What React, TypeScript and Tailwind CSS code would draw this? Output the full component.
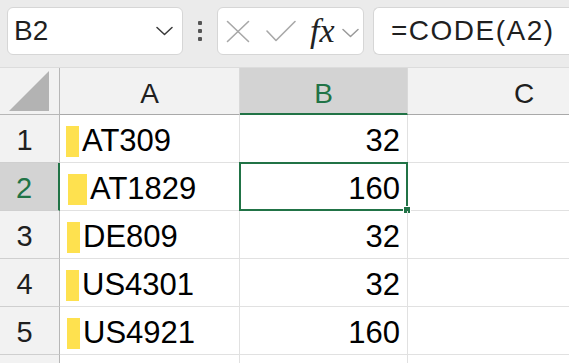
import React from 'react';

interface Row {
  id: number;
  text: string;
  code: number;
  barLeft: number;
  barWidth: number;
}

const rows: Row[] = [
  { id: 1, text: 'AT309', code: 32, barLeft: 6, barWidth: 13 },
  { id: 2, text: 'AT1829', code: 160, barLeft: 8, barWidth: 19 },
  { id: 3, text: 'DE809', code: 32, barLeft: 7, barWidth: 13 },
  { id: 4, text: 'US4301', code: 32, barLeft: 6, barWidth: 13 },
  { id: 5, text: 'US4921', code: 160, barLeft: 7, barWidth: 13 },
];

const font = { fontFamily: '"Liberation Sans", Arial, sans-serif' };

function Chevron({ color }: { color: string }) {
  return (
    <svg width="17" height="10" viewBox="0 0 17 10" fill="none">
      <path d="M1 1.5 L8.5 8.5 L16 1.5" stroke={color} strokeWidth="1.5" strokeLinecap="round" strokeLinejoin="round" />
    </svg>
  );
}

function FormulaBar() {
  return (
    <div className="flex h-[68px] items-start bg-[#ebebeb] pt-[7px] pl-[7px] border-b border-[#dcdcdc]">
      <div className="flex h-[48px] w-[176px] items-center justify-between rounded-md border border-[#d6d6d6] bg-white pl-[6px] pr-[9px]">
        <span className="text-[28px] text-[#1f1f1f]">B2</span>
        <Chevron color="#3a3a3a" />
      </div>
      <div className="ml-[15px] flex h-[48px] flex-col items-center justify-center gap-[4px]">
        <span className="h-[4px] w-[4px] rounded-[1px] bg-[#555]" />
        <span className="h-[4px] w-[4px] rounded-[1px] bg-[#555]" />
        <span className="h-[4px] w-[4px] rounded-[1px] bg-[#555]" />
      </div>
      <div className="ml-[15px] flex h-[48px] w-[147px] items-center rounded-md border border-[#d6d6d6] bg-white pl-[8px]">
        <svg width="24" height="23" viewBox="0 0 24 23" fill="none">
          <path d="M1.5 1.5 L22.5 21.5 M22.5 1.5 L1.5 21.5" stroke="#a8a8a8" strokeWidth="1.6" strokeLinecap="round" />
        </svg>
        <svg className="ml-[16px]" width="30" height="22" viewBox="0 0 30 22" fill="none">
          <path d="M1 11 L10 20.5 L29 1.5" stroke="#a8a8a8" strokeWidth="1.6" strokeLinecap="round" strokeLinejoin="round" />
        </svg>
        <span
          className="ml-[14px] text-[34px] italic leading-none text-[#222]"
          style={{ fontFamily: '"Liberation Serif", "Times New Roman", serif' }}
        >
          fx
        </span>
        <span className="ml-[7px] mt-[3px]">
          <Chevron color="#9a9a9a" />
        </span>
      </div>
      <div className="ml-[9px] flex h-[48px] flex-1 items-center rounded-l-md border border-r-0 border-[#d6d6d6] bg-white pl-[17px]">
        <span className="text-[28px] tracking-[1.5px] text-[#1f1f1f]">=CODE(A2)</span>
      </div>
    </div>
  );
}

function HeaderRow() {
  return (
    <div className="flex h-[47px] bg-[#f2f2f2]">
      <div className="flex w-[60px] shrink-0 items-center justify-center border-r border-b border-[#b7b7b7]">
        <svg width="41" height="41" viewBox="0 0 41 41">
          <polygon points="40,0 40,40 0,40" fill="#b3b3b3" />
        </svg>
      </div>
      <div className="flex w-[180px] shrink-0 items-center justify-center border-r border-b border-r-[#d9d9d9] border-b-[#a9a9a9] pt-[6px] text-[28px] text-[#1f1f1f]">
        A
      </div>
      <div className="flex w-[168px] shrink-0 items-center justify-center border-r border-b-2 border-r-[#d9d9d9] border-b-[#217346] bg-[#d3d3d3] pt-[7px] text-[28px] text-[#217346]">
        B
      </div>
      <div className="flex w-[232px] shrink-0 items-center justify-center border-b border-[#a9a9a9] pt-[6px] text-[28px] text-[#1f1f1f]">
        C
      </div>
    </div>
  );
}

function DataRow({ row }: { row: Row }) {
  const selected = row.id === 2;
  return (
    <div className="flex h-[48px]">
      <div
        className={`flex w-[60px] shrink-0 items-center justify-center border-b border-b-[#cfcfcf] pr-[10px] pt-[5px] text-[29px] ${
          selected ? 'border-r-2 border-r-[#217346] bg-[#d3d3d3] text-[#217346]' : 'border-r border-r-[#b7b7b7] bg-[#f2f2f2] text-[#1f1f1f]'
        }`}
      >
        {row.id}
      </div>
      <div className="flex w-[180px] shrink-0 items-center border-r border-b border-[#e1e1e1] pt-[5px]" style={{ paddingLeft: row.barLeft }}>
        <span className="h-[31px] bg-[#fee14f]" style={{ width: row.barWidth }} />
        <span className="ml-[3px] text-[31px] text-black">{row.text}</span>
      </div>
      <div className="relative flex w-[168px] shrink-0 items-center justify-end border-r border-b border-[#e1e1e1] pr-[7px] pt-[5px] text-[31px] text-black">
        {row.code}
        {selected && (
          <>
            <div className="absolute -top-[1px] -left-[1px] -right-[1px] -bottom-[1px] border-2 border-[#217346]" />
            <div className="absolute -right-[4px] -bottom-[4px] h-[8px] w-[8px] border border-white bg-[#217346]" />
          </>
        )}
      </div>
      <div className="w-[232px] shrink-0 border-b border-[#e1e1e1]" />
    </div>
  );
}

export default function App() {
  return (
    <div className="h-[363px] w-[569px] overflow-hidden bg-white" style={font}>
      <FormulaBar />
      <HeaderRow />
      {rows.map(row => (
        <DataRow key={row.id} row={row} />
      ))}
      <div className="flex h-[48px]">
        <div className="w-[60px] shrink-0 border-r border-[#b7b7b7] bg-[#f2f2f2]" />
        <div className="w-[180px] shrink-0 border-r border-[#e1e1e1]" />
        <div className="w-[168px] shrink-0 border-r border-[#e1e1e1]" />
      </div>
    </div>
  );
}
